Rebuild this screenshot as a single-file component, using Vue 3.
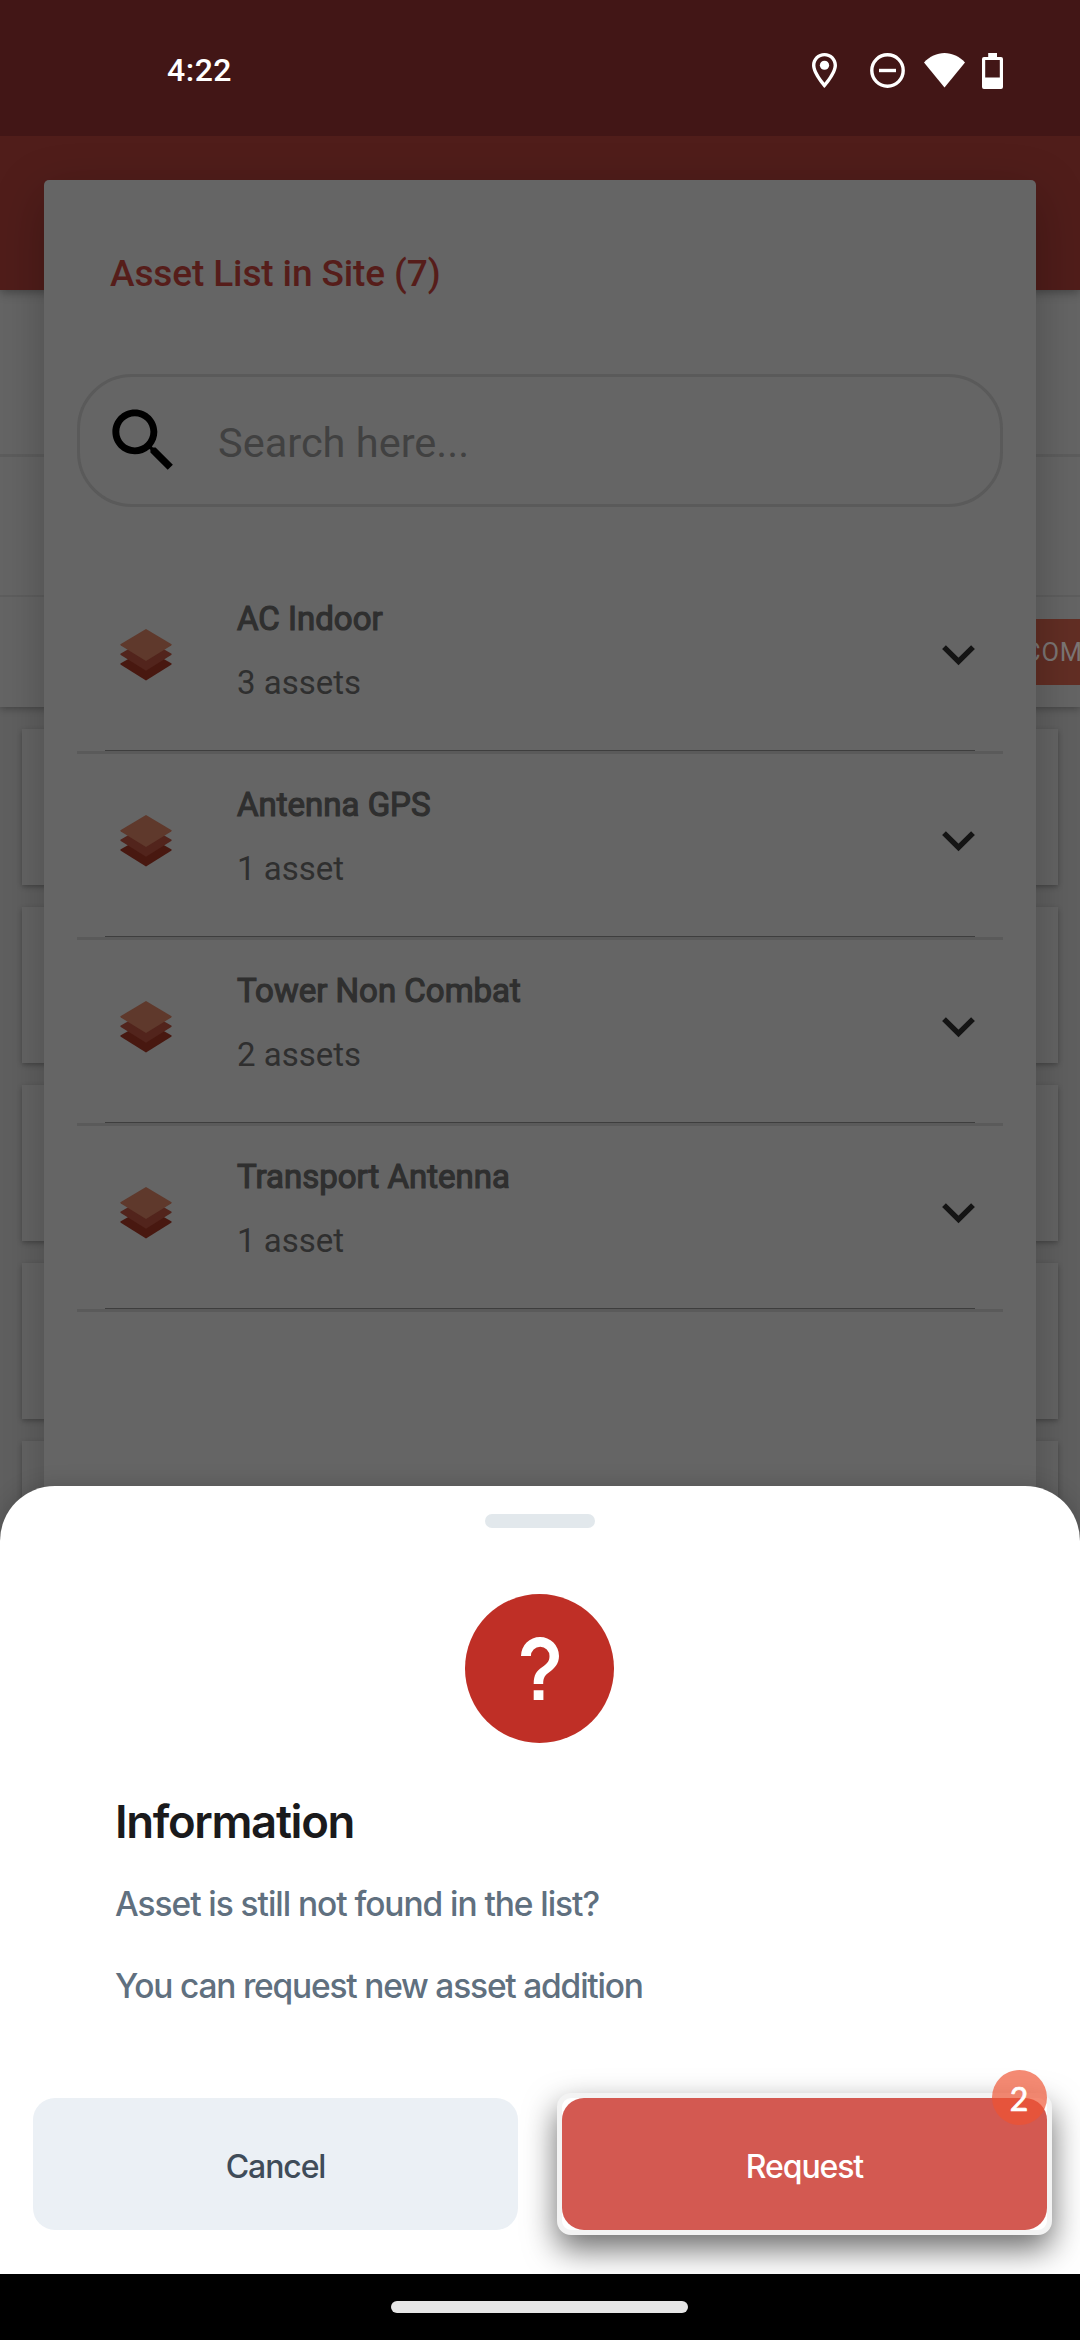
<script setup>
const groups = [
  { name: 'AC Indoor', count: '3 assets' },
  { name: 'Antenna GPS', count: '1 asset' },
  { name: 'Tower Non Combat', count: '2 assets' },
  { name: 'Transport Antenna', count: '1 asset' },
]
</script>

<template>
  <div class="screen">
    <div class="page">
      <header class="status">
        <span class="time">4:22</span>
        <div class="tray">
          <svg class="pin" viewBox="5 2 14 20" preserveAspectRatio="none" fill="#fff">
            <path d="M12 2C8.13 2 5 5.13 5 9c0 5.25 7 13 7 13s7-7.75 7-13c0-3.87-3.13-7-7-7zM6.9 9c0-2.8 2.3-5.1 5.1-5.1s5.1 2.3 5.1 5.1c0 2.9-2.9 7.2-5.1 10-2.2-2.8-5.1-7.1-5.1-10z" />
            <circle cx="12" cy="9" r="2.6" />
          </svg>
          <svg class="dnd" viewBox="0 0 35 35" fill="none" stroke="#fff" stroke-width="3.4">
            <circle cx="17.5" cy="17.5" r="15.7" />
            <path d="M9 17.5h17" />
          </svg>
          <svg class="wifi" viewBox="0 0 41 35" fill="#fff"><path d="M0 9.500C5.500 3.500 13 0 20.500 0S35.500 3.500 41 9.500L20.500 34.500z" /></svg>
          <svg class="battery" viewBox="0 0 21 36" fill="#fff" fill-rule="evenodd">
            <path d="M6.200 0h8.800v4H19a2 2 0 0 1 2 2v28a2 2 0 0 1-2 2H2a2 2 0 0 1-2-2V6a2 2 0 0 1 2-2h4.200zM3.200 7v17.500h14.600V7z" />
          </svg>
        </div>
      </header>
      <div class="appbar"></div>
      <section class="panel">
        <div class="row first"></div>
        <div class="row second"></div>
        <div class="row third"><span class="com">COM</span></div>
      </section>
      <div class="cards">
        <div v-for="n in 5" :key="n" class="card"></div>
      </div>
    </div>

    <div class="dialog">
      <h1>Asset List in Site (7)</h1>
      <div class="search">
        <svg viewBox="0 0 24 24"><path d="M15.500 14h-.79l-.28-.27C15.410 12.590 16 11.110 16 9.500 16 5.910 13.090 3 9.500 3S3 5.910 3 9.500 5.910 16 9.500 16c1.610 0 3.090-.59 4.230-1.570l.27.28v.79l5 4.990L20.490 19l-4.990-5zm-6 0C7.010 14 5 11.990 5 9.500S7.010 5 9.500 5 14 7.010 14 9.500 11.990 14 9.500 14z" /></svg>
        <span>Search here...</span>
      </div>
      <ul>
        <li v-for="g in groups" :key="g.name">
          <div class="group">
            <svg class="layers" viewBox="0 0 52 52">
              <path fill="#481810" d="M26 20 51.200 34.300q1 .7 0 1.400L26 51.500.8 35.700q-1-.7 0-1.400z" />
              <path fill="#52241c" d="M26 10 51.200 24.600q1 .7 0 1.400L26 41.800.8 26q-1-.7 0-1.400z" />
              <path fill="#5f392c" d="M26 0 51.200 15q1 .7 0 1.400L26 32 .8 16.400q-1-.7 0-1.400z" />
            </svg>
            <div class="labels">
              <strong>{{ g.name }}</strong>
              <span>{{ g.count }}</span>
            </div>
            <svg class="chevron" viewBox="0 0 33 21"><path d="M2 2.200 16.500 16.500 31 2.200" fill="none" stroke="#141414" stroke-width="5.400" /></svg>
          </div>
          <div class="rule"></div>
        </li>
      </ul>
    </div>

    <div class="sheet">
      <div class="handle"></div>
      <svg class="question" viewBox="0 0 149 149">
        <circle cx="74.500" cy="74.500" r="74.500" fill="#bf2f26" />
        <path fill="#fff" d="M56 62a19 19 0 0 1 38 0c0 8-5 12.500-9.500 16-4.500 3.300-6.300 5.300-6.300 12h-9.500c0-9.500 3-13 8-16.500 5-3.300 7.800-6 7.800-11.500a9.300 9.300 0 0 0-18.600 0zM68.700 96.200h9.700v9.700h-9.700z" />
      </svg>
      <h2>Information</h2>
      <p class="line-one">Asset is still not found in the list?</p>
      <p class="line-two">You can request new asset addition</p>
      <div class="actions">
        <button class="cancel">Cancel</button>
        <div class="focus">
          <button class="request">Request</button>
          <span class="badge">2</span>
        </div>
      </div>
    </div>

    <footer class="nav"><div class="pill"></div></footer>
  </div>
</template>

<style>
body {
  margin: 0;
  background: #fff;
}
</style>

<style scoped>
.screen {
  position: relative;
  width: 1080px;
  height: 2340px;
  overflow: hidden;
  font-family: Roboto, sans-serif;
}
.page {
  height: 1600px;
  display: flex;
  flex-direction: column;
  overflow: hidden;
  background: #606060;
}
.status {
  flex: none;
  z-index: 2;
  box-sizing: border-box;
  height: 136px;
  padding: 0 77px 0 167px;
  display: flex;
  align-items: flex-start;
  justify-content: space-between;
  background: #421616;
  color: #fff;
}
.time {
  margin-top: 50px;
  font-size: 32px;
  line-height: 40px;
  font-weight: 500;
  letter-spacing: .5px;
}
.tray {
  display: flex;
  margin-top: 53px;
}
.pin { width: 25px; height: 35px; margin-right: 33px; }
.dnd { width: 35px; height: 35px; margin-right: 19px; }
.wifi { width: 41px; height: 35px; margin-right: 17px; }
.battery { width: 21px; height: 36px; }
.appbar {
  flex: none;
  height: 154px;
  background: #501d1a;
  box-shadow: 0 2px 10px rgba(0, 0, 0, .35);
  z-index: 1;
}
.panel {
  flex: none;
  background: #656565;
  box-shadow: 0 2px 7px rgba(0, 0, 0, .28);
}
.row { box-sizing: border-box; }
.first { height: 167px; border-bottom: 3px solid #5d5d5d; }
.second { height: 140px; border-bottom: 2px solid #5e5e5e; }
.third {
  height: 110px;
  display: flex;
  justify-content: flex-end;
  align-items: flex-start;
}
.com {
  width: 56px;
  height: 66px;
  margin-top: 22px;
  overflow: hidden;
  background: #622e24;
  color: #7c7675;
  font-size: 25.5px;
  line-height: 67px;
  letter-spacing: .8px;
}
.cards {
  display: flex;
  flex-direction: column;
  gap: 22px;
  padding: 22px;
}
.card {
  flex: none;
  height: 156px;
  background: #656565;
  box-shadow: 0 2px 5px rgba(0, 0, 0, .28);
}
.dialog {
  position: absolute;
  z-index: 2;
  left: 44px;
  top: 180px;
  width: 992px;
  height: 1420px;
  box-sizing: border-box;
  padding: 69px 33px 0;
  border-radius: 5px;
  background: #656565;
  box-shadow: 0 15px 50px rgba(0, 0, 0, .25);
}
h1 {
  margin: 0 0 75px 33px;
  font-size: 37px;
  line-height: 50px;
  font-weight: 500;
  letter-spacing: -.12px;
  color: #561d1a;
}
.search {
  box-sizing: border-box;
  height: 133px;
  display: flex;
  align-items: center;
  padding-left: 22px;
  border: 3px solid #5a5a5a;
  border-radius: 55px;
}
.search svg { width: 83px; height: 83px; fill: #000; }
.search span {
  margin-left: 33px;
  padding-top: 4px;
  font-size: 41.500px;
  line-height: 50px;
  color: #414141;
}
ul { list-style: none; margin: 61px 0 0; padding: 0; }
li {
  box-sizing: border-box;
  height: 186px;
  border-bottom: 3px solid #5a5a5a;
}
.group {
  box-sizing: border-box;
  height: 182px;
  display: flex;
  align-items: flex-start;
  padding: 28px 28px 0 42.500px;
}
.layers { flex: none; width: 52px; height: 52px; margin-top: 33px; }
.labels {
  flex: 1;
  display: flex;
  flex-direction: column;
  gap: 20px;
  margin: 1px 0 0 65.500px;
  font-size: 33px;
  line-height: 44px;
  color: #2f2f2f;
}
.labels strong {
  font-weight: 400;
  -webkit-text-stroke: 1.2px #2f2f2f;
}
.chevron { width: 33px; height: 21px; margin-top: 49px; }
.rule { height: 1px; margin: 0 28px; background: #3e3e3e; }
.sheet {
  position: absolute;
  z-index: 3;
  left: 0;
  top: 1486px;
  width: 1080px;
  height: 788px;
  box-sizing: border-box;
  padding: 28px 33px 0;
  border-radius: 55px 55px 0 0;
  background: #fff;
  box-shadow: 0 0 22px rgba(0, 0, 0, .18);
  display: flex;
  flex-direction: column;
  font-family: Inter, sans-serif;
}
.handle {
  width: 110px;
  height: 14px;
  margin: 0 auto;
  border-radius: 7px;
  background: #e2e8ec;
}
.question { width: 149px; height: 149px; margin: 66px 0 0 432px; }
h2 {
  margin: 49px 0 0 82px;
  font-size: 45.500px;
  line-height: 60px;
  font-weight: 600;
  letter-spacing: -1.350px;
  color: #1a1a1c;
}
p {
  margin: 0 0 0 82px;
  font-size: 33.500px;
  line-height: 44px;
  font-weight: 500;
  color: #60707f;
}
.line-one { margin-top: 30px; letter-spacing: -1.060px; }
.line-two { margin-top: 38px; letter-spacing: -1.200px; }
.actions {
  display: flex;
  justify-content: space-between;
  margin-top: 90px;
}
button {
  display: block;
  width: 485px;
  height: 132px;
  padding: 5px 0 0;
  border: 0;
  border-radius: 22px;
  font: 500 32px/44px Inter, sans-serif;
  letter-spacing: -1.100px;
}
.cancel { background: #ebf0f5; color: #3f4c59; }
.focus {
  position: relative;
  margin: -5px -5px 0 0;
  border: 5px solid #f3f3f3;
  border-radius: 14px;
  background: #fff;
  box-shadow: 0 14px 32px rgba(0, 0, 0, .58);
}
.request { background: #d35951; color: #fff; }
.badge {
  position: absolute;
  right: 0;
  top: -28px;
  box-sizing: border-box;
  width: 55px;
  height: 55px;
  padding-right: 1px;
  border-radius: 50%;
  background: rgba(239, 83, 48, .68);
  color: #fff;
  font: 400 32px/57px Lato, sans-serif;
  -webkit-text-stroke: .7px #fff;
  text-align: center;
}
.nav {
  position: absolute;
  z-index: 4;
  left: 0;
  bottom: 0;
  width: 1080px;
  height: 66px;
  box-sizing: border-box;
  padding-top: 27px;
  background: #000;
}
.pill {
  width: 297px;
  height: 12px;
  margin-left: 391px;
  border-radius: 6px;
  background: #e6e6e6;
}
</style>
